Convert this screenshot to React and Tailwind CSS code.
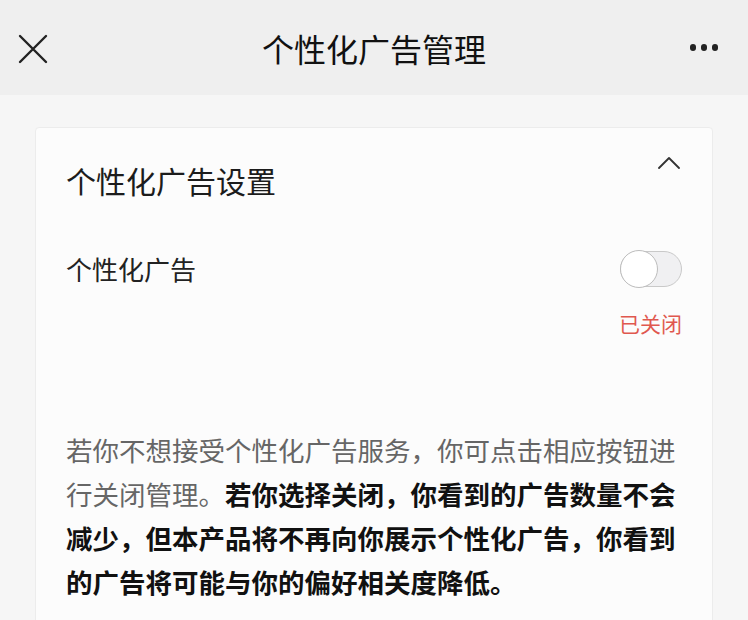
import React from 'react';

const CloseIcon = () => (
  <svg width="30" height="30" viewBox="0 0 30 30" fill="none" stroke="#222" strokeWidth="2.4" strokeLinecap="round">
    <path d="M2 2 L28 28 M28 2 L2 28" />
  </svg>
);

const Toggle = () => (
  <div className="relative w-[62px] h-[36px] rounded-full bg-[#f0f0f2] border border-[#c9c9c9]">
    <div className="absolute left-[-1px] top-[-2px] w-[38px] h-[38px] rounded-full bg-white border border-[#bdbdbd]" />
  </div>
);

export default function App() {
  return (
    <div
      className="w-[748px] h-[620px] overflow-hidden bg-[#f6f6f6]"
      style={{ fontFamily: '"Noto Sans CJK SC", "Noto Sans", sans-serif' }}
    >
      {/* top bar */}
      <div className="h-[95px] bg-[#efefef] flex items-center justify-between px-[18px]">
        <div className="w-[40px] flex items-center pt-[2px]">
          <CloseIcon />
        </div>
        <div className="text-[32px] text-[#111] font-normal">个性化广告管理</div>
        <div className="w-[40px] flex justify-end gap-[5px] pr-[12px]">
          <span className="w-[7px] h-[7px] rounded-full bg-[#222]" />
          <span className="w-[7px] h-[7px] rounded-full bg-[#222]" />
          <span className="w-[7px] h-[7px] rounded-full bg-[#222]" />
        </div>
      </div>

      {/* settings card */}
      <div className="mt-[32px] mx-[35px] bg-[#fcfcfc] border border-[#ececec] rounded-[4px] px-[30px] pt-[28px] pb-[40px]">
        <div className="flex justify-between items-start">
          <div className="text-[30px] leading-[44px] text-[#1c1c1c] mt-[2px]">个性化广告设置</div>
          <svg className="mt-[0px] mr-[2px]" width="22" height="14" viewBox="0 0 22 14" fill="none" stroke="#333" strokeWidth="1.8" strokeLinecap="round" strokeLinejoin="round">
            <path d="M1 12 L11 2 L21 12" />
          </svg>
        </div>

        <div className="mt-[49px] flex justify-between items-center">
          <div className="text-[26px] leading-[36px] text-[#222]">个性化广告</div>
          <Toggle />
        </div>
        <div className="flex justify-end mt-[21px]">
          <div className="text-[21px] leading-[30px] text-[#e0584f]">已关闭</div>
        </div>

        <p className="mt-[90px] text-[26.5px] leading-[44px]">
          <span className="text-[#666]">若你不想接受个性化广告服务，你可点击相应按钮进行关闭管理。</span>
          <span className="text-[#111] font-semibold">若你选择关闭，你看到的广告数量不会减少，但本产品将不再向你展示个性化广告，你看到的广告将可能与你的偏好相关度降低。</span>
        </p>
      </div>
    </div>
  );
}
